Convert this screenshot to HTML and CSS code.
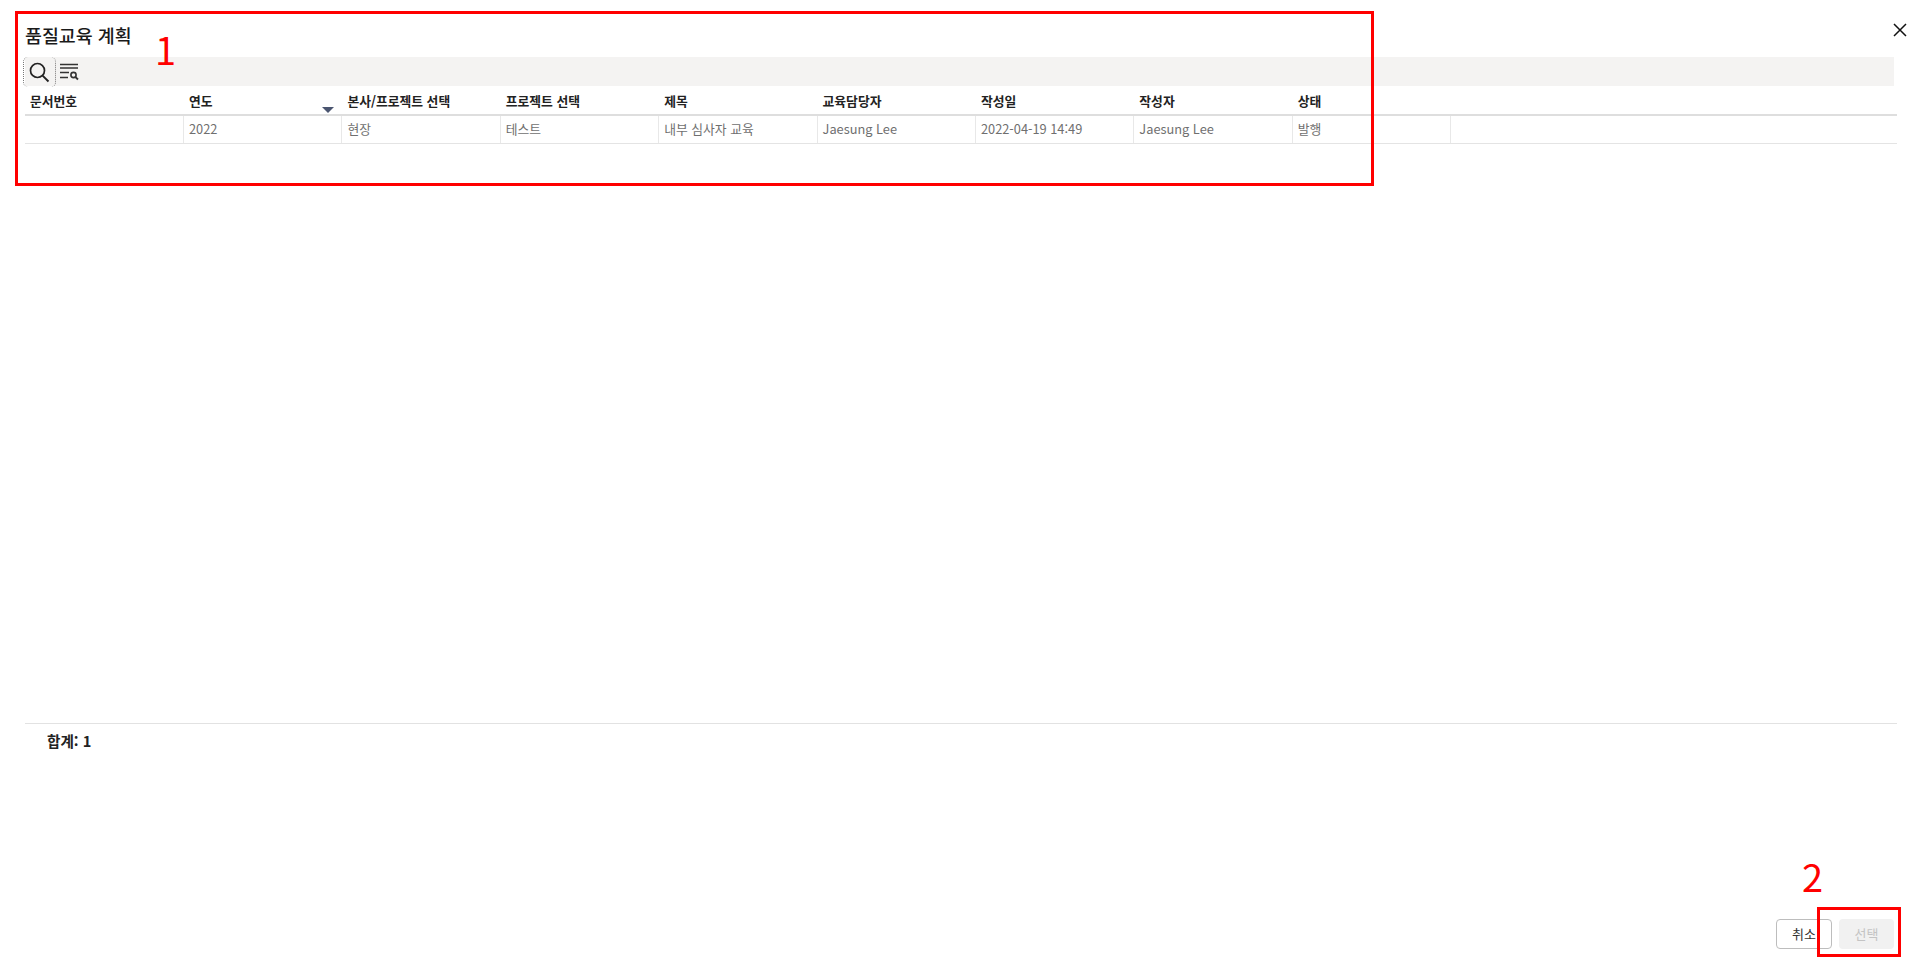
FILE: index.html
```html
<!DOCTYPE html>
<html lang="ko">
<head>
  <meta charset="UTF-8" />
  <title>품질교육 계획</title>
  <link rel="stylesheet" href="styles.css">
</head>
<body>
  <div class="dialog">
    <!-- 제목 -->
    <div class="title-bar">
      <h1 class="title">품질교육 계획</h1>
      <button class="close-btn" aria-label="닫기">
        <svg width="14" height="14" viewBox="0 0 14 14"><path d="M1 1L13 13M13 1L1 13" stroke="#111" stroke-width="1.5" fill="none"/></svg>
      </button>
    </div>

    <!-- 툴바 -->
    <div class="toolbar">
      <button class="tool-btn search-btn" aria-label="검색">
        <svg width="22" height="22" viewBox="0 0 22 22"><circle cx="9.5" cy="9.5" r="7" stroke="#222" stroke-width="1.7" fill="none"/><path d="M14.6 14.6L20.5 20.5" stroke="#222" stroke-width="1.9" fill="none"/></svg>
      </button>
      <button class="tool-btn filter-btn" aria-label="검색 필터">
        <svg width="20" height="20" viewBox="0 0 20 20"><path d="M1 2.5H19M1 6H19M1 10.5H10M1 15.5H9" stroke="#333" stroke-width="1.4" fill="none"/><circle cx="14.5" cy="13" r="2.6" stroke="#333" stroke-width="1.6" fill="none"/><path d="M16.4 15L19 17.5" stroke="#333" stroke-width="1.8" fill="none"/></svg>
      </button>
    </div>

    <!-- 목록 -->
    <div class="grid">
      <div class="grid-row grid-head">
        <div class="cell">문서번호</div>
        <div class="cell sort-cell">연도<span class="sort-arrow"></span></div>
        <div class="cell">본사/프로젝트 선택</div>
        <div class="cell">프로젝트 선택</div>
        <div class="cell">제목</div>
        <div class="cell">교육담당자</div>
        <div class="cell">작성일</div>
        <div class="cell">작성자</div>
        <div class="cell">상태</div>
      </div>
      <div class="grid-row grid-body">
        <div class="cell"></div>
        <div class="cell">2022</div>
        <div class="cell">현장</div>
        <div class="cell">테스트</div>
        <div class="cell">내부 심사자 교육</div>
        <div class="cell">Jaesung Lee</div>
        <div class="cell">2022-04-19 14:49</div>
        <div class="cell">Jaesung Lee</div>
        <div class="cell">발행</div>
      </div>
    </div>

    <div class="total">합계: 1</div>

    <!-- 하단 버튼 -->
    <div class="footer">
      <button class="btn btn-cancel">취소</button>
      <button class="btn btn-select" disabled>선택</button>
    </div>
  </div>

  <!-- 빨간 표시 -->
  <div class="mark mark-box-1"></div>
  <div class="mark mark-num-1">1</div>
  <div class="mark mark-box-2"></div>
  <div class="mark mark-num-2">2</div>
</body>
</html>
```

FILE: styles.css
```css
* {
  box-sizing: border-box;
}

html, body {
  height: 100%;
}

body {
  margin: 0;
  background: #fff;
  color: #222;
  font-family: "Noto Sans CJK KR", "Noto Sans", sans-serif;
  overflow: hidden;
}

button {
  font-family: inherit;
  background: none;
  border: none;
  padding: 0;
}

.dialog {
  height: 980px;
  display: flex;
  flex-direction: column;
  padding: 0 13px 31px 25px;
}

/* ---------- 제목 ---------- */
.title-bar {
  height: 57px;
  display: flex;
  justify-content: space-between;
  align-items: flex-start;
}

.title {
  margin: 22px 0 0;
  font-size: 18.4px;
  line-height: 26px;
  font-weight: 500;
  color: #1a1a1a;
}

.close-btn {
  display: flex;
  margin-top: 23px;
}

/* ---------- 툴바 ---------- */
.toolbar {
  height: 29px;
  margin-right: 13px;
  background: #f4f3f2;
  display: flex;
  align-items: flex-start;
}

.tool-btn {
  display: flex;
  align-items: center;
  justify-content: center;
}

.search-btn {
  width: 33px;
  height: 30px;
  margin-left: -2px;
  padding-right: 2px;
  border-left: 1px dotted #777;
  border-right: 1px dotted #777;
  border-radius: 5px;
}

.filter-btn {
  width: 20px;
  height: 29px;
  margin-left: 3px;
}

/* ---------- 목록 ---------- */
.grid {
  height: 638px;
  margin-right: 10px;
  border-bottom: 1px solid #e2e2e2;
}

.grid-row {
  display: grid;
  grid-template-columns: 159px repeat(8, 158.4px) 1fr;
}

.grid-head {
  height: 30px;
  border-bottom: 2px solid #dedede;
  font-size: 12.8px;
  font-weight: 700;
  color: #222;
}

.grid-head .cell {
  padding: 4px 5px 0;
  line-height: 22px;
}

.sort-cell {
  position: relative;
}

.sort-arrow {
  position: absolute;
  right: 8px;
  bottom: 1px;
  border-left: 6px solid transparent;
  border-right: 6px solid transparent;
  border-top: 6px solid #4a5570;
}

.grid-body {
  height: 28px;
  border-bottom: 1px solid #e4e4e4;
  font-size: 12.8px;
  color: #6f6f6f;
}

.grid-body .cell {
  padding: 0 5px;
  line-height: 26px;
  border-right: 1px solid #e8e8e8;
  white-space: nowrap;
}

/* ---------- 합계 ---------- */
.total {
  margin-top: 5px;
  padding-left: 22px;
  font-size: 14.6px;
  line-height: 24px;
  font-weight: 700;
  color: #222;
}

/* ---------- 하단 버튼 ---------- */
.footer {
  margin-top: auto;
  margin-right: 13px;
  display: flex;
  justify-content: flex-end;
  gap: 7px;
}

.btn {
  width: 55px;
  height: 30px;
  padding-bottom: 2px;
  border-radius: 4px;
  font-size: 13px;
}

.btn-cancel {
  width: 56px;
  background: #fff;
  border: 1px solid #bdbdbd;
  color: #333;
}

.btn-select {
  background: #f1f1f1;
  color: #c4c4c4;
}

/* ---------- 빨간 표시 ---------- */
.mark {
  position: absolute;
  color: #f00;
  font-size: 38px;
  line-height: 38px;
}

.mark-box-1 {
  left: 15px;
  top: 11px;
  width: 1359px;
  height: 175px;
  border: 3px solid #f00;
}

.mark-box-2 {
  left: 1817px;
  top: 907px;
  width: 84px;
  height: 50px;
  border: 3px solid #f00;
}

.mark-num-1 {
  left: 155px;
  top: 30px;
}

.mark-num-2 {
  left: 1802px;
  top: 857px;
}
```
